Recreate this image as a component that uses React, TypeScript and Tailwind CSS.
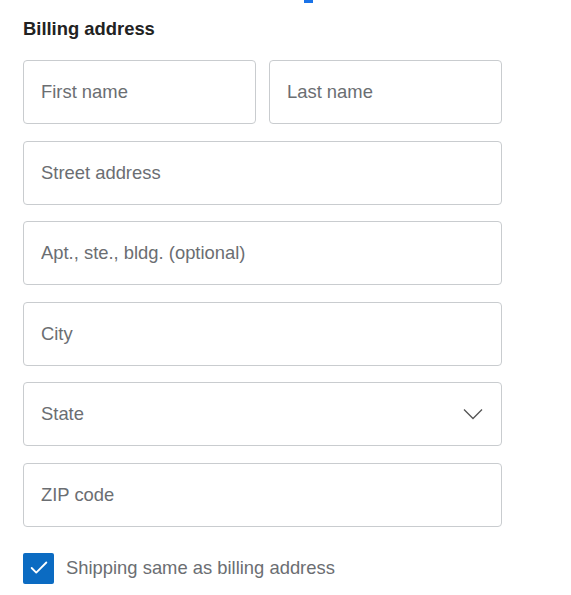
import { Check } from "lucide-react";

const field =
  "h-[64px] w-full rounded-[4px] border border-[#c9cccf] bg-white px-[17px] font-['Liberation_Sans',Arial,sans-serif] text-[18.4px] text-[#222] placeholder:text-[#6b6e72] outline-none";

function Field({ placeholder }: { placeholder: string }) {
  return <input type="text" placeholder={placeholder} className={field} />;
}

export default function App() {
  return (
    <div className="min-h-[595px] w-[571px] bg-white font-['Liberation_Sans',Arial,sans-serif]">
      <div className="ml-[304px] h-[3px] w-[9px] bg-[#1a73e8]" />
      <div className="px-[23px]">
        <h2 className="mt-[14px] text-[18.4px] font-bold leading-6 text-[#222]">Billing address</h2>

        <div className="mt-[19px] flex w-[479px] flex-col gap-[16.5px]">
          <div className="grid grid-cols-2 gap-[13px]">
            <Field placeholder="First name" />
            <Field placeholder="Last name" />
          </div>
          <Field placeholder="Street address" />
          <Field placeholder="Apt., ste., bldg. (optional)" />
          <Field placeholder="City" />
          <div className="flex h-[64px] items-center justify-between rounded-[4px] border border-[#c9cccf] px-[17px]">
            <span className="text-[18.4px] text-[#6b6e72]">State</span>
            <svg width="20" height="12" viewBox="0 0 20 12" className="mr-px text-[#555]">
              <path d="M1 1.5 L10 10.5 L19 1.5" fill="none" stroke="currentColor" strokeWidth="1.3" />
            </svg>
          </div>
          <Field placeholder="ZIP code" />
        </div>

        <label className="mt-[26px] flex items-center gap-[12px]">
          <span className="flex h-[31px] w-[31px] items-center justify-center rounded-[2px] bg-[#0b6bc2]">
            <Check size={22} strokeWidth={2} className="text-white" />
          </span>
          <span className="text-[18.4px] text-[#6b6e72]">Shipping same as billing address</span>
        </label>
      </div>
    </div>
  );
}
